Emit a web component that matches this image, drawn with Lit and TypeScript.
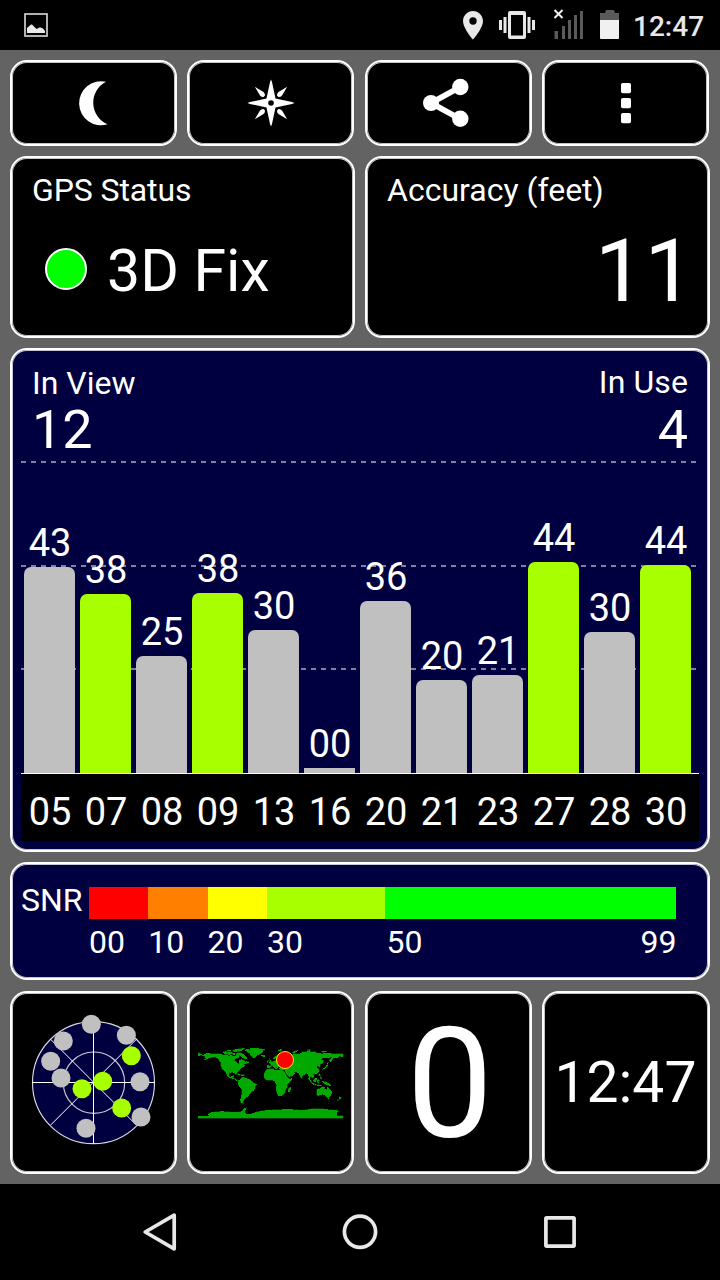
import { LitElement, html, svg, css } from "lit";
import { customElement } from "lit/decorators.js";
import { classMap } from "lit/directives/class-map.js";
import { styleMap } from "lit/directives/style-map.js";

interface Satellite {
  id: string;
  snr: string;
  height: number;
  used?: boolean;
}

const SATELLITES: Satellite[] = [
  { id: "05", snr: "43", height: 206 },
  { id: "07", snr: "38", height: 179, used: true },
  { id: "08", snr: "25", height: 117 },
  { id: "09", snr: "38", height: 180, used: true },
  { id: "13", snr: "30", height: 143 },
  { id: "16", snr: "00", height: 5 },
  { id: "20", snr: "36", height: 172 },
  { id: "21", snr: "20", height: 93 },
  { id: "23", snr: "21", height: 98 },
  { id: "27", snr: "44", height: 211, used: true },
  { id: "28", snr: "30", height: 141 },
  { id: "30", snr: "44", height: 208, used: true },
];

const SKY: [number, number, boolean][] = [
  [244, 103, false], [349, 136, false], [160, 153, false], [122, 214, false],
  [153, 264, false], [390, 275, false], [393, 381, false], [228, 415, false],
  [364, 197, true], [278, 274, true], [216, 296, true], [335, 354, true],
];

const LAND = [
  // North America
  "M36 68L42 70L48 74L39 78L36 76ZM48 77L54 75L57 71L66 69L76 72L90 71L103 71L112 76L120 73L128 77L138 76L144 79L150 76L150 70L155 72L160 80L157 84L148 86L144 92L152 96L156 102L160 101L160 90L166 88L172 89L177 94L184 97L178 102L172 103L177 108L168 112L162 118L158 124L152 128L150 134L147 129L138 127L129 130L128 139L134 142L138 137L143 138L142 144L149 147L155 152L161 150L164 147L160 155L150 152L144 147L133 144L124 139L119 126L115 121L108 116L105 108L104 98L98 88L90 82L78 81L70 84L60 89L54 90L62 83L56 83L58 80Z",
  // Arctic islands
  "M110 66L120 64L124 68L136 66L138 70L130 74L116 72ZM122 60L134 60L134 64L124 64ZM140 60L160 56L176 55L166 62L156 64L148 66L142 64ZM138 69L148 70L146 74L138 73ZM153 68L162 68L172 72L178 78L184 85L180 88L170 84L164 78L156 74ZM180 93L188 96L187 100L180 99Z",
  // Caribbean
  "M150 131L158 132L164 135L160 136ZM166 134L176 135L174 138L166 137Z",
  // Greenland and Iceland
  "M176 61L184 57L194 60L192 55L212 54L228 57L237 58L230 62L229 69L222 72L212 76L206 84L200 82L193 76L191 69L184 66ZM226 75L236 76L236 80L227 79Z",
  // South America
  "M164 145L170 141L178 144L190 148L196 154L212 163L208 170L204 181L195 186L190 194L185 201L178 204L174 211L171 216L173 220L166 220L162 211L166 201L168 178L158 167L156 158L162 151Z",
  // Africa and Madagascar
  "M241 119L248 117L263 116L265 120L278 121L292 121L295 125L303 140L309 147L318 145L315 153L303 164L303 173L298 180L298 187L290 196L278 198L273 188L270 177L272 167L265 153L258 150L242 151L234 143L234 132ZM307 177L314 171L315 176L310 186L306 184Z",
  // Eurasia
  "M243 113L244 106L254 107L254 102L249 99L262 94L270 91L271 85L262 86L263 81L273 76L283 69L294 69L300 72L320 75L321 71L330 73L345 70L348 66L364 65L366 61L374 65L391 66L390 69L408 71L425 69L438 71L471 71L471 80L459 79L457 83L444 84L438 89L434 97L430 91L437 82L423 84L413 83L404 88L412 91L411 99L402 104L403 112L397 109L393 107L391 112L397 116L400 123L394 130L382 133L384 139L379 145L375 141L371 138L371 148L367 136L362 130L355 134L348 139L348 147L342 139L339 130L328 126L319 126L327 129L320 137L309 141L300 130L296 120L283 119L279 117L282 110L295 110L287 105L279 108L274 115L270 109L265 104L273 115L269 117L259 107L252 114Z",
  // British Isles
  "M250 85L256 93L254 98L248 99L252 93ZM243 93L247 91L247 96L243 98Z",
  // Northern sea islands
  "M276 59L288 58L284 64L277 62ZM319 67L329 62L337 61L328 67L323 71ZM364 58L375 60L370 62ZM407 63L422 64L416 67L408 66Z",
  // Japan
  "M424 98L428 98L423 104ZM425 105L424 111L414 117L409 118L417 112L421 106ZM397 122L401 122L400 126Z",
  // South-east Asia
  "M367 145L373 150L378 157L386 162L383 164L373 155ZM382 149L390 143L394 146L388 157L382 154ZM398 131L403 132L402 138L398 137ZM394 149L402 151L396 153L400 159L394 156ZM386 163L398 165L408 166L402 168L388 166ZM408 153L417 155L429 160L435 167L424 166L416 161L410 157ZM402 140L408 144L405 147Z",
  // Australia, Tasmania and New Zealand
  "M392 183L394 178L403 175L409 170L417 172L415 176L422 179L425 171L430 178L438 186L436 196L429 201L421 201L416 195L408 193L399 197L392 196ZM424 203L430 203L428 208ZM460 200L467 203L463 208L459 208ZM456 208L460 210L454 213Z",
  // Antarctica
  "M36 258L72 258L66 254L72 248L86 246L108 244L132 246L160 246L170 242L174 236L182 233L180 238L176 246L180 252L196 252L210 246L232 242L258 240L282 239L304 237L326 239L350 241L376 237L404 236L430 239L459 242L452 247L453 257L471 258L471 264L36 264Z",
].join("");

@customElement("app-root")
export class AppRoot extends LitElement {
  static styles = css`
    :host {
      display: flex;
      flex-direction: column;
      width: 720px;
      height: 1280px;
      overflow: hidden;
      background: #636363;
      color: #fff;
      font-family: Roboto, "Liberation Sans", sans-serif;
      font-size: 32px;
      line-height: 32px;
      white-space: nowrap;
    }
    svg { display: block; flex: none; }
    .statusbar {
      display: flex;
      align-items: flex-start;
      height: 50px;
      padding: 0 15px 0 20px;
      background: #000;
      flex: none;
    }
    .indicators { margin-left: auto; }
    .clock {
      width: 72px;
      padding-top: 13px;
      color: #e8e8e8;
      font-size: 28px;
      font-weight: 500;
      line-height: 28px;
    }
    .body {
      flex: 1;
      display: flex;
      flex-direction: column;
      padding: 10px;
      gap: 10px;
    }
    .row { display: flex; justify-content: space-between; flex: none; }
    .card {
      box-sizing: border-box;
      border: 2px solid #fff;
      border-radius: 17px;
      background: #000;
      box-shadow: inset 0 0 0 1px #c4c4c4;
      overflow: hidden;
      flex: none;
    }
    .navy { background: #000040; box-shadow: inset 0 0 0 1px #c4c4d4; }
    .button { width: 167px; height: 86px; }
    .four { padding-right: 1px; }
    .half { width: 345px; height: 182px; padding: 16px 14px 0 20px; }
    .title { letter-spacing: -0.1px; }
    .fix { display: flex; margin: 36px 0 0 13px; gap: 20px; font-size: 59px; line-height: 58px; }
    .led {
      box-sizing: border-box;
      width: 42px;
      height: 42px;
      margin-top: 6px;
      border: 2px solid #fff;
      border-radius: 50%;
      background: #0f0;
    }
    .accuracy { margin-top: 21px; text-align: right; font-size: 88px; line-height: 88px; }
    .chart {
      display: flex;
      flex-direction: column;
      height: 504px;
      padding: 17px 9px 9px;
      background-color: #000040;
      background-image:
        repeating-linear-gradient(90deg, #80809f 0 5px, transparent 5px 10px),
        repeating-linear-gradient(90deg, #80809f 0 5px, transparent 5px 10px),
        repeating-linear-gradient(90deg, #80809f 0 5px, transparent 5px 10px);
      background-size: 675px 2px;
      background-position: 9px 111px, 9px 215px, 9px 318px;
      background-repeat: no-repeat;
    }
    .counts { display: flex; justify-content: space-between; padding: 0 11px; }
    .use { margin-top: -1px; text-align: right; letter-spacing: 0.1px; }
    .count { margin-top: 4px; font-size: 54px; line-height: 54px; letter-spacing: 0; }
    .use .count { margin-top: 5px; }
    .bars, .ids { display: flex; gap: 5px; padding-left: 3px; }
    .bars { flex: 1; min-height: 0; align-items: flex-end; border-bottom: 1px solid #fff; }
    .sat, .id { width: 51px; text-align: center; font-size: 38px; line-height: 38px; }
    .snr { padding: 0 0 5px 1px; }
    .id { box-sizing: border-box; padding-left: 1px; }
    .bar { border-radius: 7px 7px 0 0; background: #c0c0c0; }
    .bar.used { background: #a8ff00; }
    .bar.flat { border-radius: 0; }
    .ids { height: 48px; padding-top: 19px; background: #000; }
    .legend {
      display: grid;
      grid-template-columns: 68px 59.3px 59.3px 59.3px 118.6px 290.9px;
      grid-template-rows: 32px 32px;
      row-gap: 7px;
      height: 118px;
      padding: 23px 0 0 9px;
      margin-bottom: 1px;
    }
    .legend .name { margin-top: -3px; }
    .red { background: #f00; }
    .orange { background: #ff8000; }
    .yellow { background: #ff0; }
    .lime { background: #a8ff00; }
    .green { background: #0f0; }
    .ends { display: flex; justify-content: space-between; padding-left: 1px; }
    .tile { width: 167px; height: 183px; }
    .tile.wide { width: 168px; }
    .speed { padding-left: 3px; padding-top: 15px; text-align: center; font-size: 154px; line-height: 154px; }
    .time { padding-top: 61px; padding-right: 1px; text-align: center; font-size: 57px; line-height: 58px; }
    .navbar { height: 96px; background: #000; flex: none; }
  `;

  private statusBar() {
    return html`<div class="statusbar">
      <svg width="32" height="50" viewBox="20 0 32 50">
        <rect x="25" y="14" width="22" height="22" fill="none" stroke="#cfcfcf" stroke-width="1.7" />
        <path d="M27 33V28L31 24.5L32 24.5L36.500 29L40 27.300L43 28.500L45 31V33Z" fill="#e8e8e8" />
      </svg>
      <svg class="indicators" width="173" height="50" viewBox="460 0 173 50">
        <path fill="#e8e8e8" transform="translate(455.9 8.100) scale(1.425)"
          d="M12 2C8.130 2 5 5.130 5 9c0 5.250 7 13 7 13s7-7.750 7-13c0-3.870-3.130-7-7-7zm0 9.600a2.600 2.600 0 1 1 0-5.200 2.600 2.600 0 0 1 0 5.200z" />
        <path fill="#e8e8e8" fill-rule="evenodd"
          d="M510 11H524Q526 11 526 13V37Q526 39 524 39H510Q508 39 508 37V13Q508 11 510 11ZM511 15V35.500H523V15Z" />
        <path fill="#e8e8e8" d="M499 20h3v10h-3zM503.500 17h3v16h-3zM527.500 17h3v16h-3zM532 20h3v10h-3z" />
        <path fill="#5a5a5a" d="M554.500 31h3.500v8h-3.500zM562 26h3v13h-3zM568 20h3v19h-3zM574 15h3v24h-3zM580 11h3v28h-3z" />
        <path d="M554.500 10L562.500 18M562.500 10L554.500 18" stroke="#f0f0f0" stroke-width="2" />
        <path fill="#5a5a5a" d="M600 13h5l1-3h8l1 3h4v7h-19z" />
        <path fill="#f0f0f0" d="M600 20h19v18q0 1-1 1h-17q-1 0-1-1z" />
      </svg>
      <div class="clock">12:47</div>
    </div>`;
  }

  private skyPlot() {
    return html`<svg width="163" height="179" viewBox="6 9 489 537">
      <circle cx="250.500" cy="278" r="183" fill="#000040" stroke="#d8d8e0" stroke-width="3.500" />
      <circle cx="252" cy="278" r="92" fill="none" stroke="#c8c8d4" stroke-width="3.500" />
      <path d="M250.500 95V461M67 277.500H434M122 148L379 405M379 148L122 405" stroke="#fff" stroke-width="3" />
      ${SKY.map(([x, y, used]) => svg`<circle cx=${x} cy=${y} r="28.500" fill=${used ? "#a8ff00" : "#c0c0c0"} />`)}
    </svg>`;
  }

  private worldMap() {
    return html`<svg width="163" height="179" viewBox="9 -111 489 537">
      <path d=${LAND} fill="#00a800" stroke="#00a800" stroke-width="1" shape-rendering="crispEdges" />
      <circle cx="297" cy="90" r="25.500" fill="#f00" stroke="#ffe000" stroke-width="3" />
    </svg>`;
  }

  render() {
    return html`
      ${this.statusBar()}
      <div class="body">
        <div class="row four">
          <div class="card button">
            <svg width="163" height="82" viewBox="12 62 163 82">
              <path fill="#fff" d="M106 81.800A22 22 0 1 0 107.500 124.300A23.500 23.500 0 0 1 106 81.800Z" />
            </svg>
          </div>
          <div class="card button">
            <svg width="163" height="82" viewBox="189 62 163 82">
              <g transform="translate(271 103)">
                <path fill="#fff" d="M0-23.500L1-21L4.500-4.500L21-1L23.500 0L21 1L4.500 4.500L1 21L0 23.500L-1 21L-4.500 4.500L-21 1L-23.500 0L-21-1L-4.500-4.500L-1-21Z" />
                <circle r="2.800" fill="#000" />
                ${[0, 90, 180, 270].map((a) => svg`<path fill="#fff" transform="rotate(${a})"
                  d="M-16.200-16.200L-7.500-11Q-5.800-9.500-6-7.500L-7.500-6Q-9.500-5.800-11-7.500Z" />`)}
              </g>
            </svg>
          </div>
          <div class="card button">
            <svg width="163" height="82" viewBox="367 62 163 82">
              <path d="M460.300 87L431 103L460.300 119" fill="none" stroke="#fff" stroke-width="5.800" />
              <circle cx="431" cy="103" r="8" fill="#fff" />
              <circle cx="460.300" cy="87" r="8.200" fill="#fff" />
              <circle cx="460.300" cy="118.800" r="8.200" fill="#fff" />
            </svg>
          </div>
          <div class="card button">
            <svg width="163" height="82" viewBox="544 62 163 82" fill="#fff">
              <rect x="621" y="83" width="10" height="10.300" rx="1.800" />
              <rect x="621" y="98" width="10" height="10.300" rx="1.800" />
              <rect x="621" y="113" width="10" height="10.300" rx="1.800" />
            </svg>
          </div>
        </div>
        <div class="row">
          <div class="card half">
            <div class="title">GPS Status</div>
            <div class="fix"><span class="led"></span><span>3D Fix</span></div>
          </div>
          <div class="card half">
            <div>Accuracy (feet)</div>
            <div class="accuracy">11</div>
          </div>
        </div>
        <div class="card navy chart">
          <div class="counts">
            <div><div>In View</div><div class="count">12</div></div>
            <div class="use"><div>In Use</div><div class="count">4</div></div>
          </div>
          <div class="bars">
            ${SATELLITES.map((s) => html`<div class="sat">
              <div class="snr">${s.snr}</div>
              <div class=${classMap({ bar: true, used: !!s.used, flat: s.height < 7 })}
                style=${styleMap({ height: `${s.height}px` })}></div>
            </div>`)}
          </div>
          <div class="ids">${SATELLITES.map((s) => html`<div class="id">${s.id}</div>`)}</div>
        </div>
        <div class="card navy legend">
          <span class="name">SNR</span>
          <span class="red"></span><span class="orange"></span><span class="yellow"></span>
          <span class="lime"></span><span class="green"></span>
          <span></span><span>00</span><span>10</span><span>20</span><span>30</span>
          <span class="ends"><span>50</span><span>99</span></span>
        </div>
        <div class="row">
          <div class="card tile">${this.skyPlot()}</div>
          <div class="card tile">${this.worldMap()}</div>
          <div class="card tile speed">0</div>
          <div class="card tile wide time">12:47</div>
        </div>
      </div>
      <div class="navbar">
        <svg width="720" height="96" viewBox="0 1184 720 96" fill="none" stroke="#e8e8e8" stroke-width="3.700">
          <path d="M145.200 1232L174.200 1215.200V1248.800Z" stroke-linejoin="round" />
          <circle cx="360" cy="1231.800" r="15.600" />
          <rect x="545.900" y="1217.900" width="28.200" height="28.200" rx="0.800" />
        </svg>
      </div>
    `;
  }
}
